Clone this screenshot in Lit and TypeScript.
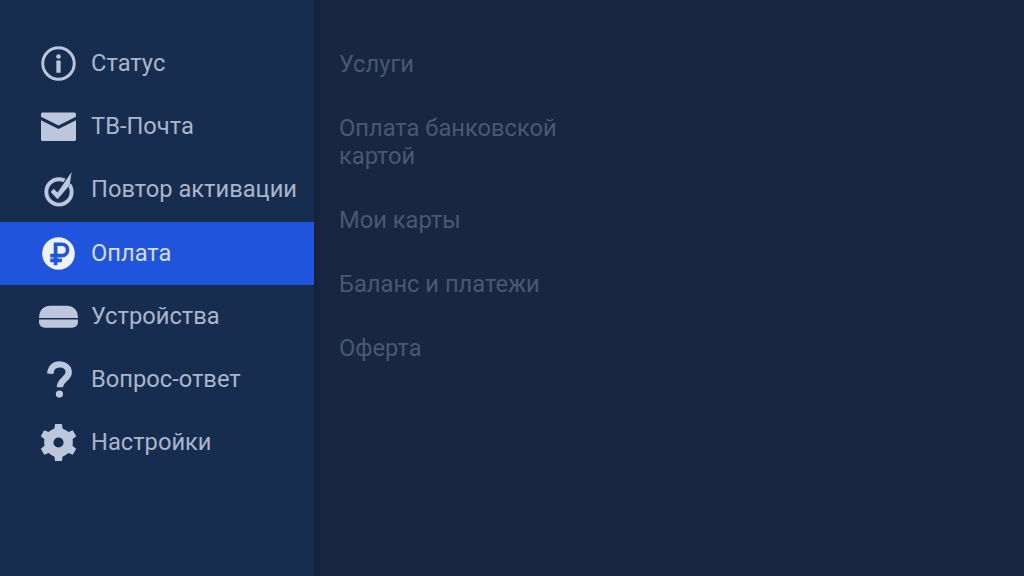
import { LitElement, html, css, svg } from "lit";
import { customElement } from "lit/decorators.js";

const teeth = [0, 60, 120, 180, 240, 300].map(
  (a) => svg`<path d="M14.500-1h7l1.500 9h-10z" fill="currentColor" transform="rotate(${a} 18 18)"/>`
);

const icons: Record<string, unknown> = {
  info: svg`<circle cx="18" cy="18" r="16.200" fill="none" stroke="currentColor" stroke-width="3"/><circle cx="18" cy="10.800" r="2.400" fill="currentColor"/><rect x="15.800" y="15" width="4.400" height="12.500" rx=".6" fill="currentColor"/>`,
  mail: svg`<path d="M0 5.500C0 4 1 3.500 2 3.500h32c1 0 2 .5 2 2v2.500L18 17 0 8zM0 11.500l18 9 18-9V31c0 1.300-1 2-2 2H2c-1 0-2-.7-2-2z" fill="currentColor"/>`,
  check: svg`<circle cx="18.500" cy="20.500" r="13" fill="none" stroke="currentColor" stroke-width="4"/><path d="M11 19.500l6 6L29 8" fill="none" stroke="#172d50" stroke-width="7"/><path d="M10 20.500l3-3.300 4 4L31.500 0l-2 13.500L17 28z" fill="currentColor"/>`,
  ruble: svg`<circle cx="18" cy="18" r="16.800" fill="currentColor"/><path d="M15 30V8.500h6.500a5.800 5.800 0 0 1 0 11.600H9.500M9.500 25h12" fill="none" stroke="#2154dc" stroke-width="3.800"/>`,
  device: svg`<path d="M-2 19.500C-2 13 1 7 10 7h16c9 0 12 6 12 12.500z" fill="currentColor"/><path d="M-2 21h40v3c0 3.500-3 5.500-6 5.500H4c-3 0-6-2-6-5.500z" fill="currentColor"/>`,
  help: svg`<path d="M9.500 12C10 6 14 2.500 19 2.500c5.500 0 9.500 3.200 9.500 8 0 7-9 7.500-9 15.500" fill="none" stroke="currentColor" stroke-width="6.500"/><circle cx="19" cy="33" r="3.700" fill="currentColor"/>`,
  gear: svg`${teeth}<circle cx="18" cy="18" r="10" fill="none" stroke="currentColor" stroke-width="9.500"/>`,
};

const menu = [
  ["info", "Статус"],
  ["mail", "ТВ-Почта"],
  ["check", "Повтор активации"],
  ["ruble", "Оплата"],
  ["device", "Устройства"],
  ["help", "Вопрос-ответ"],
  ["gear", "Настройки"],
];

const sub = ["Услуги", "Оплата банковской картой", "Мои карты", "Баланс и платежи", "Оферта"];

@customElement("app-root")
export class AppRoot extends LitElement {
  static styles = css`
    :host {
      display: flex;
      width: 1024px;
      height: 576px;
      overflow: hidden;
      background: #18263f;
      font-family: Roboto, "Liberation Sans", sans-serif;
      font-size: 23.7px;
    }
    .side {
      width: 314px;
      flex: none;
      padding-top: 32px;
      box-sizing: border-box;
      background: #172d50;
      box-shadow: 3px 0 6px rgba(10, 18, 34, 0.25);
      color: #aab5cb;
    }
    .row {
      display: flex;
      align-items: center;
      height: 63.2px;
      gap: 15px;
      padding-left: 41px;
    }
    .row span {
      margin-bottom: 1px;
    }
    .row.on {
      background: #2154dc;
      color: #d3def5;
    }
    .row svg {
      width: 35px;
      height: 35px;
      flex: none;
      overflow: visible;
      color: #bcc6dc;
    }
    .row.on svg {
      color: #eef2fa;
    }
    .main {
      padding: 50px 0 0 25px;
      color: #4a5873;
      display: flex;
      flex-direction: column;
      gap: 36px;
    }
    .main div {
      width: 240px;
      line-height: 28px;
    }
  `;

  render() {
    return html`
      <nav class="side">
        ${menu.map(
          ([icon, label]) => html`<div class="row ${icon === "ruble" ? "on" : ""}">
            <svg viewBox="0 0 36 36">${icons[icon]}</svg><span>${label}</span>
          </div>`
        )}
      </nav>
      <section class="main">${sub.map((s) => html`<div>${s}</div>`)}</section>
    `;
  }
}
